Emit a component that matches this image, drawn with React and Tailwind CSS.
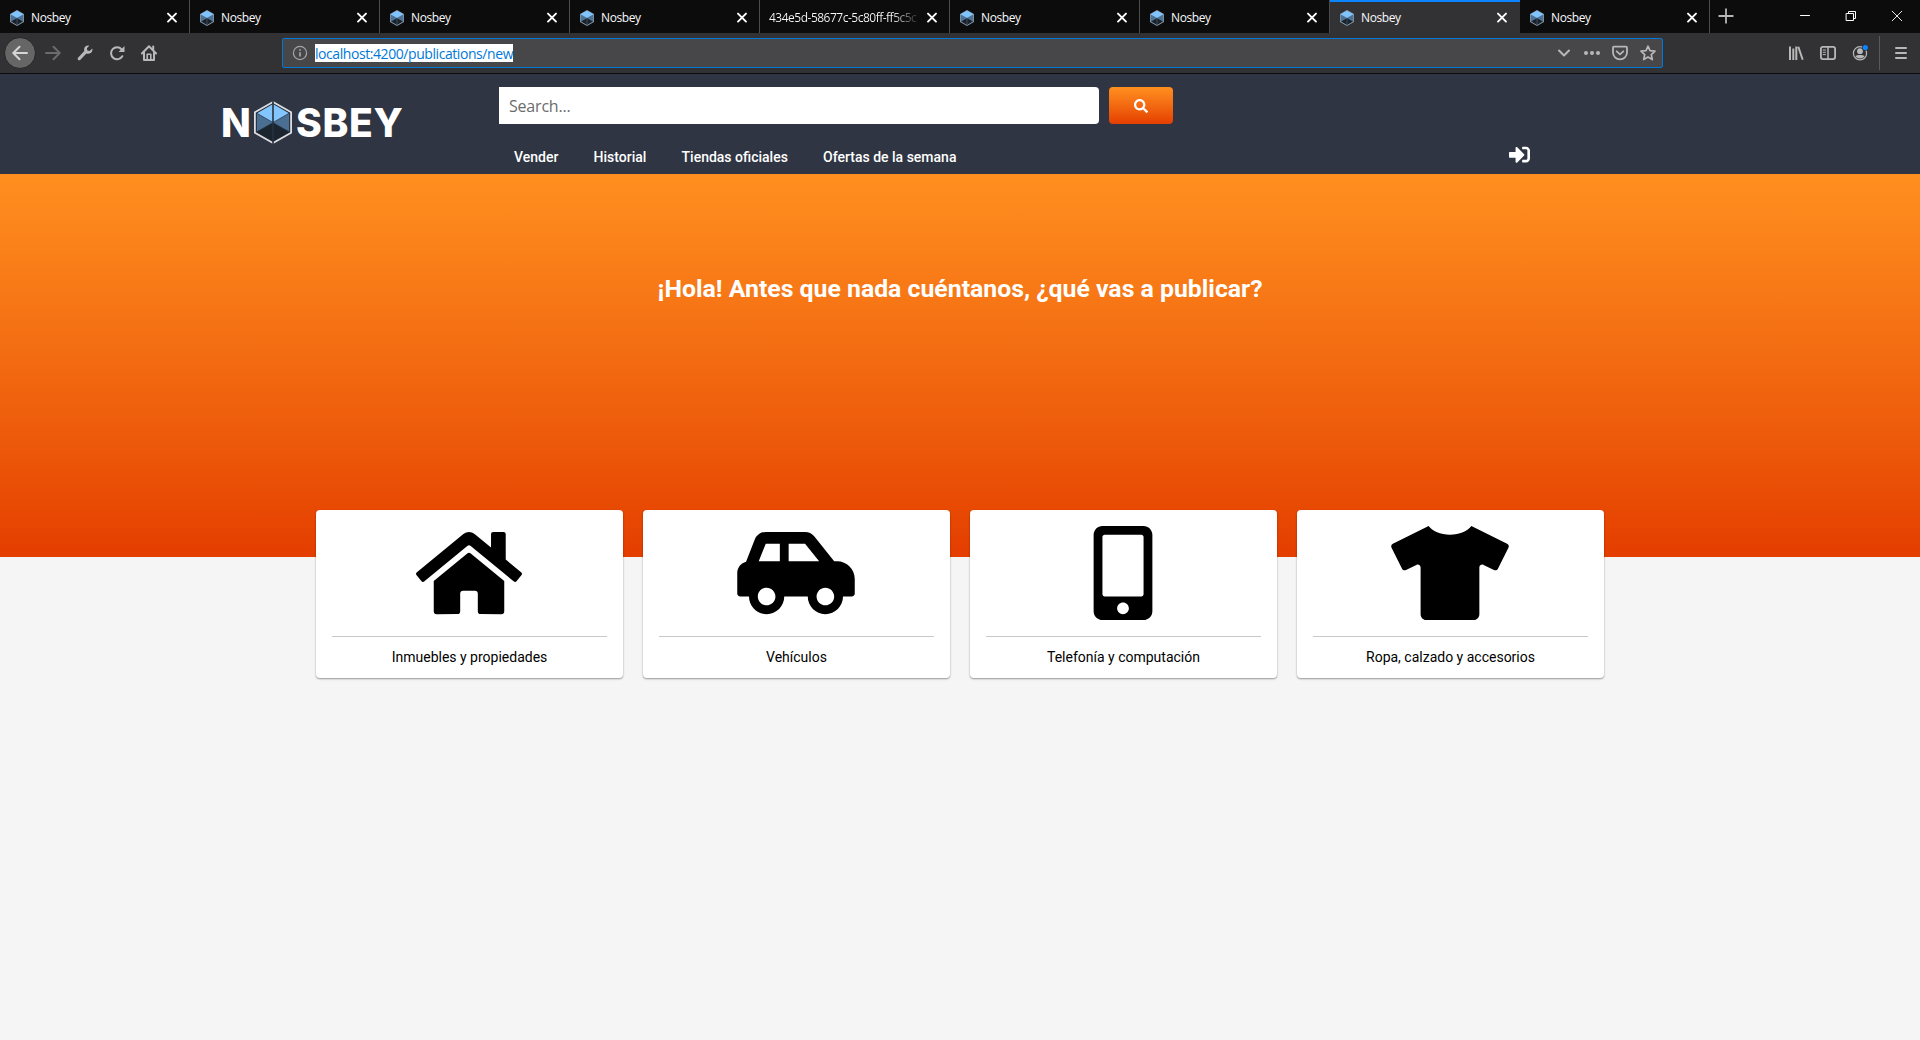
import React from "react";
import { FaHome, FaCarSide, FaMobileAlt, FaTshirt, FaSearch, FaSignInAlt } from "react-icons/fa";

const tabs = [
  { title: "Nosbey" },
  { title: "Nosbey" },
  { title: "Nosbey" },
  { title: "Nosbey" },
  { title: "434e5d-58677c-5c80ff-ff5c5c", plain: true },
  { title: "Nosbey" },
  { title: "Nosbey" },
  { title: "Nosbey", active: true },
  { title: "Nosbey" },
];

const categories = [
  { label: "Inmuebles y propiedades", Icon: FaHome },
  { label: "Vehículos", Icon: FaCarSide },
  { label: "Telefonía y computación", Icon: FaMobileAlt },
  { label: "Ropa, calzado y accesorios", Icon: FaTshirt },
];

const links = ["Vender", "Historial", "Tiendas oficiales", "Ofertas de la semana"];

function Hexagon({ className, stroke }) {
  return (
    <svg viewBox="0 0 38 43" className={className}>
      <path d="M19 1 .9 11.300v20.400L19 42l18.100-10.300V11.300z" fill="none" stroke={stroke} strokeWidth="1.800" />
      <path d="M19 2.500 2.300 12v19L19 40.500 35.700 31V12z" fill="#1b2530" />
      <path d="M19 3 3 12.200 19 21.500l16-9.300z" fill="#83c5ff" />
      <path d="M2.800 12.500v18L19 21.500zM35.200 12.500v18L19 21.500z" fill="#4b6f92" />
      <path d="M2.800 12.200 35.200 30.800M35.200 12.200 2.800 30.800" stroke="#2f4258" strokeWidth=".6" />
      <path d="M19 0v43" stroke="#28313e" strokeWidth="1.600" />
    </svg>
  );
}

function Favicon() {
  return (
    <svg viewBox="0 0 16 16" className="size-4 shrink-0">
      <path d="M8 0 1 4v8l7 4 7-4V4z" fill="#8b9aa8" />
      <path d="M8 .8 1.6 4.3 8 8l6.4-3.7z" fill="#7fc4ff" />
      <path d="M1.7 4.5v7L8 8zM14.3 4.5v7L8 8z" fill="#4b7398" />
      <path d="M8 8 2 11.6 8 15l6-3.4z" fill="#18222d" />
      <path d="M8 8v7.5" stroke="#4b5c6c" strokeWidth=".7" />
    </svg>
  );
}

function Line({ d, className = "size-4", w = 2, children }) {
  return (
    <svg viewBox="0 0 16 16" className={className} fill="none" stroke="currentColor" strokeWidth={w} strokeLinecap="round" strokeLinejoin="round">
      {d && <path d={d} />}
      {children}
    </svg>
  );
}

function Tab({ tab }) {
  return (
    <div className={tab.active ? "flex h-[33px] w-[190px] items-center border-t-2 border-[#0a84ff] bg-[#323234] pr-px pl-[9px]" : "flex h-[33px] w-[190px] items-center border-r border-[#4c4c4d] pt-[2px] pl-[9px]"}>
      {!tab.plain && <span className="mr-[6px] flex"><Favicon /></span>}
      <span className={tab.plain ? "w-[153px] whitespace-nowrap bg-gradient-to-r from-[#f9f9fa] from-80% to-[#0c0c0d] bg-clip-text pt-px text-[12px] tracking-[-0.5px] text-transparent" : "pt-px text-[12px] tracking-[-0.4px] text-[#f9f9fa]"}>
        {tab.title}
      </span>
      <span className={tab.plain ? "ml-[2px] text-white" : "mr-[9px] ml-auto text-white"}>
        <Line className="size-[16px]" w={1.9} d="M4 3.6l8 8M12 3.6l-8 8" />
      </span>
    </div>
  );
}

function TabStrip() {
  return (
    <div className="flex h-[33px] bg-[#0c0c0d]">
      {tabs.map((t, i) => <Tab key={i} tab={t} />)}
      <span className="mt-[8px] ml-[8px] text-[#b6b6b7]"><Line w={1.8} d="M8 1.2v13.6M1.2 8h13.6" /></span>
      <div className="mt-[8px] mr-[15px] ml-auto flex gap-[30px] text-white">
        <Line w={1} d="M3.5 7.5h9" />
        <Line w={1}><path d="M3.5 5.5h7v7h-7zM5.5 5v-1.5h7v7H11" strokeLinejoin="miter" /></Line>
        <Line w={0.9} d="M3.2 3.2l9.6 9.6M12.8 3.2l-9.6 9.6" />
      </div>
    </div>
  );
}

function Toolbar() {
  return (
    <div className="flex h-[41px] items-center border-b border-[#0c0c0d] bg-[#323234] pl-1 text-[#b8b8b9]">
      <span className="flex size-8 items-center justify-center rounded-full border border-[#252526] bg-[#666667] text-[#d6d6d7]">
        <Line d="M15 8H1.5M7.5 1.7 1.3 8l6.2 6.3" />
      </span>
      <span className="ml-[9px] text-[#6b6b6c]"><Line d="M1 8h13.5M8.500 1.700 14.700 8l-6.200 6.300" /></span>
      <span className="ml-[16px]">
        <svg viewBox="0 0 16 16" className="size-4" fill="currentColor">
          <path d="M15.300 3.600 12.600 5.900 10.300 5.600 9.900 3.200 12.200.7C9.700-.2 6.600 1.800 7.200 5.300L7.300 6 1 12.800c-1.200 1.500.8 3.300 2.200 2.100L9.400 8.600c3.300 1.100 6.800-1.400 5.900-5z" />
        </svg>
      </span>
      <span className="ml-[16px]">
        <svg viewBox="0 0 16 16" className="size-4" fill="none" stroke="currentColor" strokeWidth="2">
          <path d="M13.300 11.200A6 6 0 1 1 12.600 4.300" strokeLinecap="round" />
          <path d="M15.500 1v6h-6z" fill="currentColor" stroke="none" />
        </svg>
      </span>
      <span className="ml-[16px]">
        <svg viewBox="0 0 16 16" className="size-4" fill="none" stroke="currentColor" strokeWidth="2" strokeLinecap="round" strokeLinejoin="round">
          <path d="M.9 8.500 8 1.300l7.100 7.200M3 7.500V15h10V7.500" />
          <path d="M6.200 15V9.200h3.600V15" strokeWidth="1.600" />
          <path d="M12.200 1.500v3" strokeWidth="2" />
        </svg>
      </span>
      <div className="ml-[125px] flex h-[30px] w-[1381px] items-center rounded-[2px] border border-[#0078d7] bg-[#474749] pl-[9px]">
        <svg viewBox="0 0 16 16" className="size-4 text-[#a5a5a6]" fill="none" stroke="currentColor">
          <circle cx="8" cy="8" r="6.600" strokeWidth="1.200" />
          <path d="M8 7.200v4.300M8 4.300v1.500" strokeWidth="1.700" />
        </svg>
        <span className="ml-[7px] h-[18px] w-[198px] whitespace-nowrap bg-white text-[14px] leading-[19px] tracking-[-0.43px] text-[#0078d7]">localhost:4200/publications/new</span>
        <div className="mr-[6px] ml-auto flex gap-[12px]">
          <Line d="M3 5.500l5 5 5-5" />
          <svg viewBox="0 0 16 16" className="size-4" fill="currentColor">
            <circle cx="2" cy="8" r="2" /><circle cx="8" cy="8" r="2" /><circle cx="14" cy="8" r="2" />
          </svg>
          <Line w={1.8}>
            <path d="M2 1.700h12a1 1 0 0 1 1 1V7.500a7 6.800 0 0 1-14 0V2.700a1 1 0 0 1 1-1z" />
            <path d="M4.700 6.300 8 9.300l3.300-3" />
          </Line>
          <Line w={1.700} d="M8 1.200l2 4.500 5 .5-3.700 3.400 1 5L8 12.100l-4.300 2.500 1-5L1 6.200l5-.5z" />
        </div>
      </div>
      <div className="ml-auto flex items-center gap-[16px]">
        <svg viewBox="0 0 16 16" className="size-4" fill="none" stroke="currentColor" strokeWidth="2">
          <path d="M2 1.500V15M5.300 3.500V15M8.300 1.500V15M10.300 1.800 14.700 14.700" />
        </svg>
        <Line w={1.800}>
          <rect x=".9" y="1.900" width="14.200" height="12.200" rx="2" />
          <path d="M8 2v12" strokeWidth="1.500" />
          <path d="M3.200 5h2.300M3.200 7.300h2.300M3.200 9.600h2.300" strokeWidth="1" />
        </Line>
        <svg viewBox="0 0 16 16" className="size-4 overflow-visible">
          <circle cx="8" cy="8.300" r="6.600" fill="none" stroke="currentColor" strokeWidth="1.200" />
          <circle cx="8" cy="6.200" r="2.900" fill="currentColor" />
          <path d="M3.300 11c1.500-1.500 7.900-1.500 9.400 0-1.500 3.300-7.900 3.300-9.400 0z" fill="currentColor" />
          <circle cx="13.300" cy="2.500" r="3.300" fill="#323234" />
          <circle cx="13.300" cy="2.500" r="2.600" fill="#0a84ff" />
        </svg>
      </div>
      <div className="ml-[11px] h-[34px] w-px bg-[#59595a]" />
      <span className="mr-[11px] ml-[13px]"><Line d="M3 3h10M3 8h10M3 13h10" /></span>
    </div>
  );
}

function Header() {
  return (
    <header className="flex h-[100px] bg-[#2f3542] text-white">
      <div className="mt-[26px] ml-[221px] flex h-[45px] w-[278px] items-center font-['Inter'] text-[39px] leading-none font-extrabold">
        <span className="w-[33px]">N</span>
        <Hexagon className="h-[43px] w-[38px] shrink-0" stroke="#dcdde0" />
        <span className="ml-[4px] tracking-[0.700px]">SBEY</span>
      </div>
      <div className="flex flex-1 flex-col pt-[13px]">
        <div className="flex gap-[10px]">
          <div className="flex h-[37px] w-[600px] items-center rounded-r-[4px] bg-white pl-[10px] font-['Open_Sans'] text-[16px] tracking-[-0.2px] text-[#6c6c6c]">Search...</div>
          <button className="flex h-[37px] w-[64px] items-center justify-center rounded-[4px] bg-linear-to-b from-[#ff8f1f] to-[#e43d00]"><FaSearch className="size-[14px]" /></button>
        </div>
        <nav className="mt-[23px] flex gap-[35.200px] pl-[15px] font-['Roboto'] text-[14px] leading-[20px] font-medium">
          {links.map((l) => <a key={l}>{l}</a>)}
        </nav>
      </div>
      <FaSignInAlt className="mt-[70px] mr-[390px] size-[21px]" />
    </header>
  );
}

export default function App() {
  return (
    <div className="flex h-[1040px] w-[1920px] flex-col overflow-hidden bg-[#f5f5f5] font-['Open_Sans',sans-serif]">
      <TabStrip />
      <Toolbar />
      <Header />
      <section className="h-[383px] bg-linear-to-b from-[#ff8f1f] to-[#e43d00] pt-[99px]">
        <h1 className="text-center font-['Roboto'] text-[24.800px] leading-[32px] font-bold text-white">¡Hola! Antes que nada cuéntanos, ¿qué vas a publicar?</h1>
      </section>
      <main className="-mt-[47px] flex justify-center gap-5">
        {categories.map(({ label, Icon }) => (
          <article key={label} className="h-[168px] w-[307px] rounded-[4px] bg-white px-4 shadow-[0_1px_2px_rgba(0,0,0,0.4)]">
            <div className="flex h-[127px] items-center justify-center border-b border-[#c8c8c8] pr-px pb-px"><Icon className="h-[94px] w-[118px]" /></div>
            <p className="pt-[10px] text-center font-['Roboto'] text-[14px] leading-[20px] text-black">{label}</p>
          </article>
        ))}
      </main>
    </div>
  );
}
